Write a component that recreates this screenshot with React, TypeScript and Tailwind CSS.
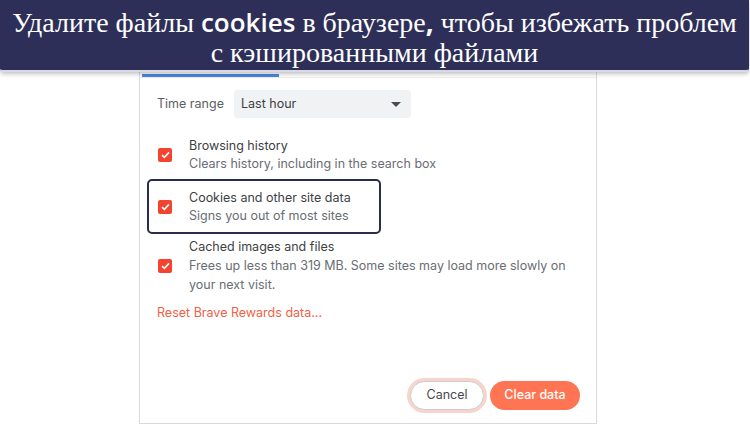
import React from "react";

function Check() {
  return (
    <div className="w-[14px] h-[14px] rounded-[2px] bg-[#f4432f] flex items-center justify-center shrink-0">
      <svg width="9" height="8" viewBox="0 0 9 8">
        <path d="M1 4.2 L3.4 6.4 L8 1.4" stroke="white" strokeWidth="1.6" fill="none" />
      </svg>
    </div>
  );
}

function Item({ title, sub }: { title: string; sub: React.ReactNode }) {
  return (
    <div className="flex items-center">
      <div className="w-[32px] pl-[1px]"><Check /></div>
      <div className="flex flex-col text-[12.5px] leading-[18px]">
        <span className="text-[#3c3f44]">{title}</span>
        <span className="text-[#6a6d73]">{sub}</span>
      </div>
    </div>
  );
}

export default function App() {
  return (
    <div className="w-[750px] h-[425px] bg-white relative overflow-hidden" style={{ fontFamily: "Inter, 'Noto Sans', sans-serif" }}>
      <div className="absolute left-0 top-0 w-[749px] h-[72px] bg-[#2e2f58] rounded-b-[3px] border-b-2 border-[#d8d9e6] shadow-[0_2px_4px_rgba(0,0,0,0.25)] z-10 flex flex-col items-center justify-center pt-[3px] text-white text-[28px] leading-[30px]" style={{ fontFamily: "'Liberation Serif', 'DejaVu Serif', serif" }}>
        <div className="whitespace-nowrap">Удалите файлы <span className="text-[26px] font-semibold" style={{ fontFamily: "'Open Sans', sans-serif" }}>cookies</span> в браузере<span className="font-bold" style={{ fontFamily: "'Open Sans', sans-serif" }}>,</span> чтобы избежать проблем</div>
        <div>с кэшированными файлами</div>
      </div>
      <div className="ml-[139px] w-[458px] h-[424px] border-x border-b border-[#d9d9de] flex flex-col">
        <div className="h-[74px]" />
        <div className="h-[4px] border-b border-[#ececf0] relative">
          <div className="ml-[2px] w-[137px] h-[3px] bg-[#4b87e0]" />
        </div>
        <div className="pl-[17px] flex flex-col">
          <div className="flex items-center mt-[12px] h-[28px]">
            <span className="text-[12.5px] text-[#5b5e63] w-[77px]">Time range</span>
            <div className="w-[177px] h-[28px] rounded-[4px] bg-[#f1f2f4] flex items-center justify-between pl-[7px] pr-[10px]">
              <span className="text-[12.5px] text-[#3c3f44]">Last hour</span>
              <svg width="10" height="5" viewBox="0 0 10 5"><path d="M0 0 L10 0 L5 5 Z" fill="#4a4d52" /></svg>
            </div>
          </div>
          <div className="mt-[19px]">
            <Item title="Browsing history" sub="Clears history, including in the search box" />
          </div>
          <div className="ml-[-10px] mt-[6px] w-[234px] h-[55px] border-2 border-[#2a2b4d] rounded-[5px] flex items-center pl-[8px]">
            <Item title="Cookies and other site data" sub="Signs you out of most sites" />
          </div>
          <div className="mt-[3px]">
            <div className="flex items-center">
              <div className="w-[32px] pl-[1px]"><Check /></div>
              <div className="flex flex-col text-[12.5px] leading-[19px]">
                <span className="text-[#3c3f44]">Cached images and files</span>
                <span className="text-[#6a6d73]">Frees up less than 319 MB. Some sites may load more slowly on<br />your next visit.</span>
              </div>
            </div>
          </div>
          <div className="mt-[10px] text-[12.5px] text-[#f05f47]">Reset Brave Rewards data...</div>
        </div>
        <div className="flex-1" />
        <div className="flex justify-end items-center gap-[6px] pr-[16px] mb-[13px]">
          <div className="w-[74px] h-[29px] rounded-full bg-white border border-[#c9cbd0] shadow-[0_0_0_3px_#f9d4cc] flex items-center justify-center text-[12.5px] text-[#45484d]">Cancel</div>
          <div className="w-[90px] h-[29px] rounded-full bg-[#ff7553] flex items-center justify-center text-[12.5px] font-medium text-white">Clear data</div>
        </div>
      </div>
    </div>
  );
}
